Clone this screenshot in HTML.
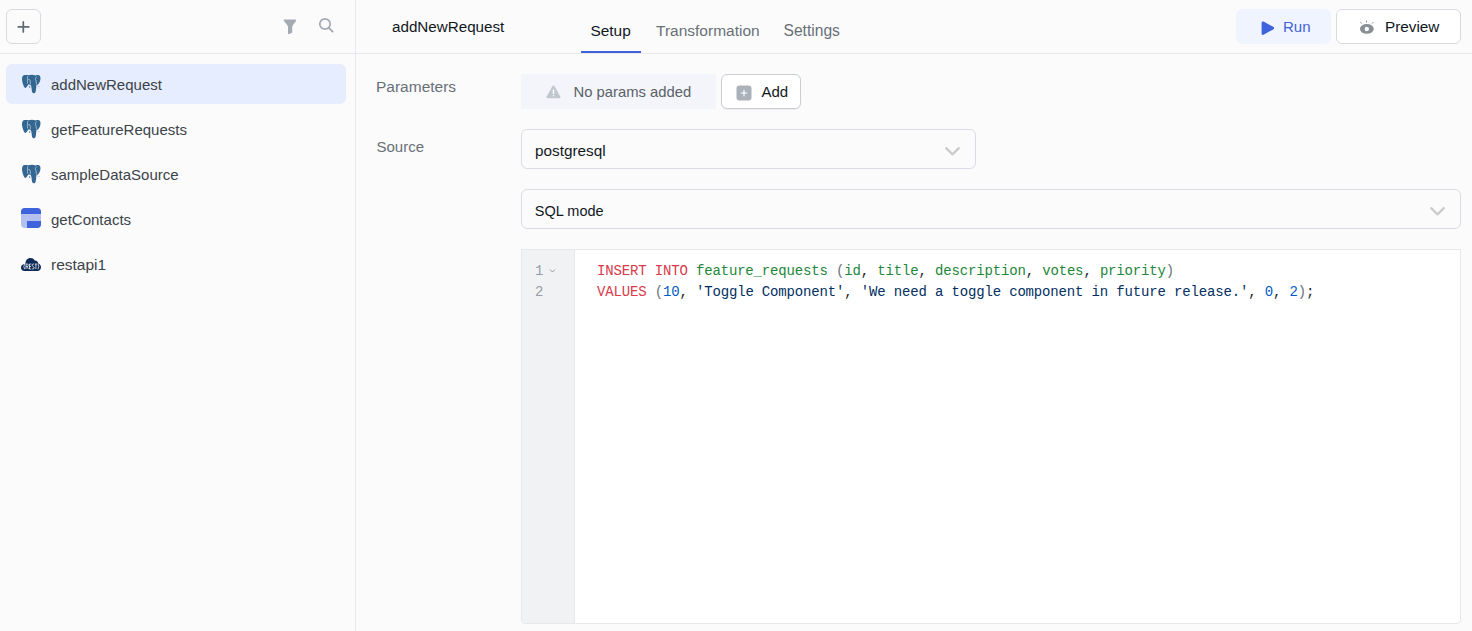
<!DOCTYPE html>
<html><head><meta charset="utf-8">
<style>
*{box-sizing:border-box;margin:0;padding:0}
html,body{width:1472px;height:631px;overflow:hidden;background:#fbfbfc;font-family:"Liberation Sans",sans-serif;}
.a{position:absolute}
.t{position:absolute;white-space:pre;font-size:15px;line-height:20px;}
#side{left:0;top:0;width:356px;height:631px;border-right:1px solid #e6e8eb;background:#fbfbfc}
#sidehead{left:0;top:0;width:355px;height:54px;border-bottom:1px solid #e6e8eb}
#plus{left:6px;top:9px;width:35px;height:35px;border:1px solid #d7dbdf;border-radius:6px;background:#fbfbfc}
.sel{left:6px;top:64px;width:340px;height:40px;border-radius:6px;background:#e6edfe}
.item{color:#3c4349}
#mainhead{left:356px;top:0;width:1116px;height:54px;border-bottom:1px solid #e6e8eb}
.lbl{color:#687076}
.btn{border-radius:6px}
.code{position:absolute;white-space:pre;font-family:"Liberation Mono",monospace;font-size:14px;letter-spacing:-0.16px;line-height:21px}
.kw{color:#d73a49}.id{color:#22863a}.st{color:#032f62}.nu{color:#005cc5}.pu{color:#24292e}.br{color:#6a737d}
</style></head>
<body>
<!-- SIDEBAR -->
<div id="side" class="a"></div>
<div id="sidehead" class="a"></div>
<div id="plus" class="a"></div>
<svg class="a" style="left:14px;top:18px" width="20" height="18" viewBox="0 0 20 18">
  <path d="M4.3 8.9 H14.7 M9.3 3.9 V13.9" stroke="#606870" stroke-width="1.7" stroke-linecap="round"/>
</svg>
<!-- filter -->
<svg class="a" style="left:282px;top:19px" width="16" height="16" viewBox="0 0 16 16">
  <path d="M1.9 0.5 H13.1 Q14.8 0.6 14 2 Q11.2 5.2 10.2 7.6 V12.9 Q10.2 13.7 9.4 14.1 L7.3 15 Q6 15.5 6 14.2 V7.6 Q4.8 5.2 2 2 Q1.2 0.6 1.9 0.5 Z" fill="#a3aab1"/>
</svg>
<!-- search -->
<svg class="a" style="left:317px;top:16px" width="18" height="18" viewBox="0 0 18 18">
  <circle cx="8" cy="8" r="5.2" fill="none" stroke="#a3aab1" stroke-width="1.7"/>
  <path d="M11.8 11.8 L15.6 15.6" stroke="#a3aab1" stroke-width="1.9" stroke-linecap="round"/>
</svg>

<div class="a sel"></div>
<!-- elephant icons -->
<svg class="a" style="left:20px;top:73px" width="22" height="22" viewBox="0 0 22 22" id="pg1">
  <path fill="#336791" d="M3.2 2.4 C5 1.6 7 1.9 8.2 2.3 C10.4 1.6 13.6 1.6 15.6 2.4 C17.4 1.7 19.4 2 20.2 3.4 C20.8 5 20.4 7.6 19.4 9.4 C18.6 10.8 17.6 11.8 16.4 12.2 C16.2 14.2 16.1 16.6 15.7 18.4 C15.3 19.7 14.6 20.2 13.6 20.2 C12.6 20.2 12.1 19.4 11.9 18 C11.6 15.6 11.5 13.4 10.8 12.2 C10 11.6 9.2 11.4 8.2 11.6 C7.4 13.2 6.4 15 5.4 14.9 C4 14.6 2.8 11.4 2.2 8 C1.8 5.6 2 3.2 3.2 2.4 Z"/>
  <path fill="#336791" d="M9 14 a0.7 0.7 0 1 0 1.4 0 a0.7 0.7 0 1 0 -1.4 0Z"/>
  <path d="M17.4 13.3 H19.9" stroke="#336791" stroke-width="0.5" opacity="0.5"/>
  <g fill="none" stroke="#ffffff" stroke-width="0.6" opacity="0.85">
  <path d="M7.9 3 C7.3 5 7.3 8 7.6 10.6 M7.9 7 C8.7 6.2 10 6.3 10.2 7.8 L10.4 11.4"/>
  <path d="M16.8 3.4 C15.4 4.4 15 6.6 16 7.8 M16 7.8 L16.5 11.6"/>
  </g>
</svg>
<svg class="a" style="left:20px;top:118px" width="22" height="22" viewBox="0 0 22 22"><use href="#pg1"/></svg>
<svg class="a" style="left:20px;top:163px" width="22" height="22" viewBox="0 0 22 22"><use href="#pg1"/></svg>
<!-- contacts icon -->
<svg class="a" style="left:21px;top:208px" width="20" height="20" viewBox="0 0 20 20">
  <defs><clipPath id="rr"><rect x="0" y="0" width="20" height="20" rx="4"/></clipPath></defs>
  <g clip-path="url(#rr)">
    <rect x="0" y="0" width="20" height="20" fill="#b4c0f0"/>
    <rect x="0" y="0" width="20" height="6" fill="#3e63dd"/>
    <rect x="6" y="13" width="14" height="7" fill="#3e63dd"/>
  </g>
</svg>
<!-- rest cloud -->
<svg class="a" style="left:21px;top:256px" width="20" height="16" viewBox="0 0 20 16">
  <path d="M4.4 8 C4.4 4.2 6.6 2 9.4 2 C11.8 2 13.2 3.4 13.8 4.6 C16 4.6 17 6 17.2 7.6 C19 8.2 20 9.6 20 11.2 C20 13.6 18.4 15 16.4 15 H3.6 C1.6 15 0 13.6 0 11.4 C0 9.4 1.6 8 4.4 8 Z" fill="#0e2a56"/>
  <path d="M3.9 8 Q3.2 8 3.2 9 V10 L2.8 10.5 L3.2 11 V12 Q3.2 13 3.9 13 M5 13 V8 H6.3 Q7.3 8 7.3 9.2 Q7.3 10.4 6.3 10.4 H5 M6.3 10.4 L7.3 13 M10.3 8 H8.5 V13 H10.3 M8.5 10.5 H10 M13.1 8.4 Q12.7 8 12.1 8 Q11.1 8 11.1 9.2 Q11.1 10.2 12.1 10.5 Q13.1 10.8 13.1 11.8 Q13.1 13 12.1 13 Q11.5 13 11 12.6 M13.8 8 H16 M14.9 8 V13 M16.7 8 Q17.4 8 17.4 9 V10 L17.8 10.5 L17.4 11 V12 Q17.4 13 16.7 13" fill="none" stroke="#ffffff" stroke-width="0.75"/>
</svg>

<div class="t item" style="left:51px;top:74.8px">addNewRequest</div>
<div class="t item" style="left:51px;top:119.8px">getFeatureRequests</div>
<div class="t item" style="left:51px;top:164.8px">sampleDataSource</div>
<div class="t item" style="left:51px;top:209.8px">getContacts</div>
<div class="t item" style="left:51px;top:254.6px;font-size:15.5px">restapi1</div>

<!-- MAIN HEADER -->
<div id="mainhead" class="a"></div>
<div class="t" style="left:392px;top:16.8px;color:#11181c;font-size:15.2px">addNewRequest</div>
<div class="t" style="left:590.5px;top:20.8px;color:#11181c;font-size:15.4px">Setup</div>
<div class="a" style="left:581px;top:51px;width:60px;height:2px;background:#3e63dd"></div>
<div class="t lbl" style="left:656px;top:20.6px;font-size:15.5px">Transformation</div>
<div class="t lbl" style="left:783.5px;top:20.6px;font-size:15.6px">Settings</div>

<div class="a btn" style="left:1236px;top:9px;width:95px;height:35px;background:#f0f4ff"></div>
<svg class="a" style="left:1258.6px;top:19.5px" width="17" height="17" viewBox="0 0 17 17">
  <path d="M2.6 3.2 C2.6 1.6 3.6 1 5 1.8 L14.2 6.8 C15.4 7.5 15.4 8.7 14.2 9.4 L5 14.6 C3.6 15.4 2.6 14.8 2.6 13.2 Z" fill="#3e63dd"/>
</svg>
<div class="t" style="left:1283px;top:16.8px;color:#3e63dd">Run</div>

<div class="a btn" style="left:1336px;top:9px;width:125px;height:35px;background:#ffffff;border:1px solid #d7dbdf"></div>
<svg class="a" style="left:1358px;top:19px" width="17" height="16" viewBox="0 0 17 16">
  <ellipse cx="8.85" cy="9.95" rx="6.9" ry="4.85" fill="#889096"/>
  <circle cx="8.8" cy="10" r="2.2" fill="#ffffff"/>
  <path d="M8.5 1.8 V3.2 M2.6 3.3 L3.4 4.3 M15.2 3.3 L14.3 4.3" stroke="#8d959b" stroke-width="0.95" stroke-linecap="round"/>
</svg>
<div class="t" style="left:1385px;top:16.6px;color:#11181c;font-size:15.3px">Preview</div>

<!-- FORM -->
<div class="t lbl" style="left:376px;top:77px;font-size:15.5px">Parameters</div>
<div class="a" style="left:521px;top:74px;width:195px;height:35px;background:#f3f5fa"></div>
<svg class="a" style="left:546px;top:85px" width="15" height="14" viewBox="0 0 15 14">
  <path d="M6.3 1.2 C6.8 0.3 8.2 0.3 8.7 1.2 L14.3 11.4 C14.8 12.3 14.2 13.2 13.2 13.2 H1.8 C0.8 13.2 0.2 12.3 0.7 11.4 Z" fill="#c1c8cd"/>
  <rect x="6.8" y="4.2" width="1.4" height="4.8" rx="0.6" fill="#fff"/>
  <circle cx="7.5" cy="10.8" r="0.8" fill="#fff"/>
</svg>
<div class="t" style="left:573.5px;top:82px;color:#5b6168;font-size:14.8px">No params added</div>
<div class="a btn" style="left:721px;top:74px;width:80px;height:35px;background:#ffffff;border:1px solid #c9ced3;box-shadow:0 1px 1px rgba(16,24,40,0.06)"></div>
<svg class="a" style="left:736px;top:85px" width="16" height="16" viewBox="0 0 16 16">
  <rect x="0.5" y="0.5" width="15" height="15" rx="3" fill="#aab1b8"/>
  <path d="M8 4.8 V11.2 M4.8 8 H11.2" stroke="#fff" stroke-width="1.2"/>
</svg>
<div class="t" style="left:761.5px;top:82px;color:#11181c">Add</div>

<div class="t lbl" style="left:376.5px;top:137px">Source</div>
<div class="a btn" style="left:521px;top:129px;width:455px;height:40px;border:1px solid #d9dde3;background:#fbfbfc"></div>
<div class="t" style="left:535px;top:141px;color:#11181c;font-size:15.3px">postgresql</div>
<svg class="a" style="left:944px;top:145px" width="17" height="12" viewBox="0 0 17 12">
  <path d="M2.2 3.2 L8.5 9.3 L14.8 3.2" fill="none" stroke="#cccccc" stroke-width="2.3" stroke-linecap="round" stroke-linejoin="round"/>
</svg>

<div class="a btn" style="left:521px;top:189px;width:940px;height:40px;border:1px solid #d9dde3;background:#fbfbfc"></div>
<div class="t" style="left:534.8px;top:201.2px;color:#11181c;font-size:14.5px">SQL mode</div>
<svg class="a" style="left:1429px;top:205px" width="17" height="12" viewBox="0 0 17 12">
  <path d="M2.2 3.2 L8.5 9.3 L14.8 3.2" fill="none" stroke="#cccccc" stroke-width="2.3" stroke-linecap="round" stroke-linejoin="round"/>
</svg>

<!-- EDITOR -->
<div class="a" style="left:521px;top:249px;width:940px;height:375px;border:1px solid #e6e8eb;border-radius:0 0 4px 4px;background:#ffffff;overflow:hidden">
  <div class="a" style="left:0;top:0;width:53px;height:100%;background:#f0f2f4;border-right:1px solid #e6e8eb"></div>
</div>
<div class="code" style="left:535px;top:261px;color:#999da3">1</div>
<div class="code" style="left:535px;top:282px;color:#999da3">2</div>
<svg class="a" style="left:549px;top:268px" width="7" height="6" viewBox="0 0 7 6">
  <path d="M1 1.5 L3.5 4 L6 1.5" fill="none" stroke="#8a9096" stroke-width="0.9"/>
</svg>
<div class="code" style="left:597px;top:261px"><span class="kw">INSERT</span> <span class="kw">INTO</span> <span class="id">feature_requests</span> <span class="br">(</span><span class="id">id</span><span class="pu">,</span> <span class="id">title</span><span class="pu">,</span> <span class="id">description</span><span class="pu">,</span> <span class="id">votes</span><span class="pu">,</span> <span class="id">priority</span><span class="br">)</span></div>
<div class="code" style="left:597px;top:282px"><span class="kw">VALUES</span> <span class="br">(</span><span class="nu">10</span><span class="pu">,</span> <span class="st">'Toggle Component'</span><span class="pu">,</span> <span class="st">'We need a toggle component in future release.'</span><span class="pu">,</span> <span class="nu">0</span><span class="pu">,</span> <span class="nu">2</span><span class="br">)</span><span class="pu">;</span></div>
</body></html>
